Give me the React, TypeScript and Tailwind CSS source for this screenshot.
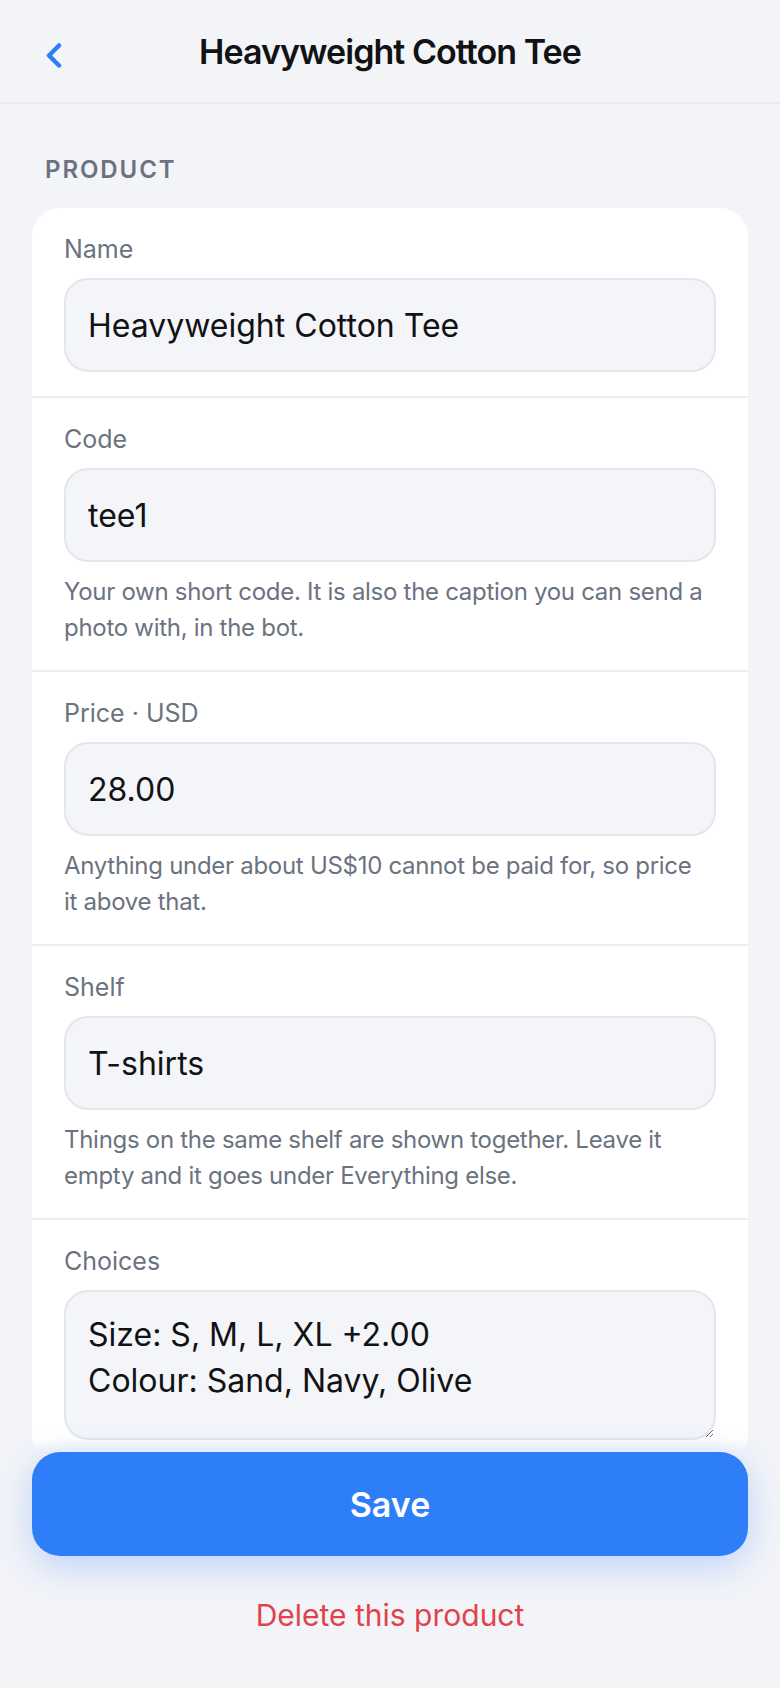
import { useState } from "react";

interface FieldProps {
  label: string;
  value: string;
  hint?: string[];
}

function Field({ label, value, hint }: FieldProps) {
  const [val, setVal] = useState(value);
  return (
    <div className="border-b-2 border-[#eceef2] px-8 pt-6 pb-6">
      <label className="block text-[25px] leading-[34px] text-[#6b7280]">{label}</label>
      <input
        value={val}
        onChange={(e) => setVal(e.target.value)}
        className="mt-3 block h-[94px] w-full rounded-[24px] border-2 border-[#e3e6eb] bg-[#f4f5f9] px-[22px] text-[32px] text-[#111214] outline-none"
      />
      {hint && (
        <p className="mt-3 text-[24px] leading-[36px] tracking-[-0.012em] text-[#6b7280]">
          {hint[0]}
          <br />
          {hint[1]}
        </p>
      )}
    </div>
  );
}

export default function App() {
  const [choices, setChoices] = useState("Size: S, M, L, XL +2.00\nColour: Sand, Navy, Olive");

  return (
    <div className="relative h-[1688px] w-full overflow-hidden bg-[#f3f4f8] font-[Inter,sans-serif]">
      <header className="grid h-[104px] grid-cols-[1fr_auto_1fr] items-center border-b-2 border-[#e8eaee] px-[44px]">
        <button type="button" className="flex h-[40px] w-[40px] items-center pt-[10px]">
          <svg width="20" height="26" viewBox="0 0 20 26" fill="none">
            <path
              d="M15 2.5 L5 12.5 L15 22.5"
              stroke="#2f7ef6"
              strokeWidth="4.5"
              strokeLinecap="round"
              strokeLinejoin="round"
            />
          </svg>
        </button>
        <h1 className="text-[34px] font-semibold tracking-[-0.028em] text-[#111214]">
          Heavyweight Cotton Tee
        </h1>
        <div />
      </header>

      <main className="pb-[200px]">
        <h2 className="mt-[50px] px-[45px] text-[24px] font-semibold leading-[32px] tracking-[0.08em] text-[#6b7280]">
          PRODUCT
        </h2>
        <section className="mx-8 mt-[22px] rounded-[28px] bg-white">
          <Field label="Name" value="Heavyweight Cotton Tee" />
          <Field
            label="Code"
            value="tee1"
            hint={["Your own short code. It is also the caption you can send a", "photo with, in the bot."]}
          />
          <Field
            label="Price · USD"
            value="28.00"
            hint={["Anything under about US$10 cannot be paid for, so price", "it above that."]}
          />
          <Field
            label="Shelf"
            value="T-shirts"
            hint={["Things on the same shelf are shown together. Leave it", "empty and it goes under Everything else."]}
          />
          <div className="px-8 pt-6 pb-6">
            <label className="block text-[25px] leading-[34px] text-[#6b7280]">Choices</label>
            <textarea
              value={choices}
              onChange={(e) => setChoices(e.target.value)}
              className="mt-3 block h-[150px] w-full rounded-[24px] border-2 border-[#e3e6eb] bg-[#f4f5f9] px-[22px] py-[20px] text-[32px] leading-[46px] text-[#111214] outline-none"
            />
          </div>
        </section>
      </main>

      <footer className="absolute inset-x-0 bottom-0">
        <div className="h-[14px] bg-gradient-to-b from-[#f3f4f8]/0 to-[#f3f4f8]" />
        <div className="bg-[#f3f4f8] px-8 pb-[53px]">
          <button
            type="button"
            className="flex h-[104px] w-full items-center justify-center rounded-[28px] bg-[#2f7ef9] text-[34px] font-semibold text-white shadow-[0_10px_36px_rgba(47,126,249,0.28)]"
          >
            Save
          </button>
          <button
            type="button"
            className="mt-[39px] block h-[40px] w-full text-center text-[30px] leading-[40px] text-[#e0434d]"
          >
            Delete this product
          </button>
        </div>
      </footer>
    </div>
  );
}
